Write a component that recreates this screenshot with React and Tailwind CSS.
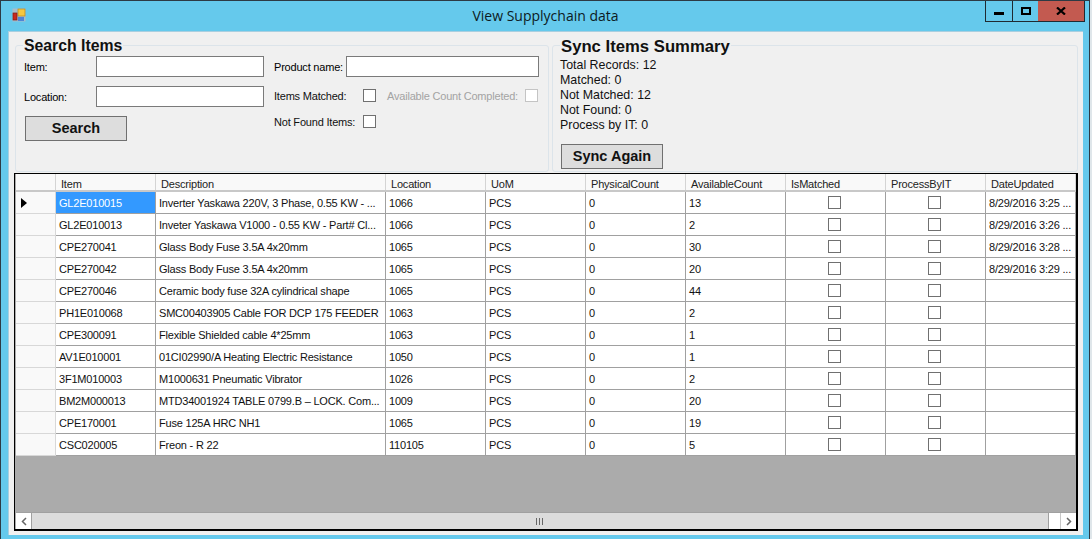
import React from 'react';

const small = "text-[11px] tracking-[-0.2px] whitespace-nowrap";

const columns = ['Item', 'Description', 'Location', 'UoM', 'PhysicalCount', 'AvailableCount', 'IsMatched', 'ProcessByIT', 'DateUpdated'];

const rows = [
    ['GL2E010015', 'Inverter Yaskawa 220V, 3 Phase, 0.55 KW - ...', '1066', '13', '8/29/2016 3:25 ...'],
    ['GL2E010013', 'Inveter Yaskawa V1000 - 0.55 KW - Part# Cl...', '1066', '2', '8/29/2016 3:26 ...'],
    ['CPE270041', 'Glass Body Fuse 3.5A 4x20mm', '1065', '30', '8/29/2016 3:28 ...'],
    ['CPE270042', 'Glass Body Fuse 3.5A 4x20mm', '1065', '20', '8/29/2016 3:29 ...'],
    ['CPE270046', 'Ceramic body fuse 32A cylindrical shape', '1065', '44', ''],
    ['PH1E010068', 'SMC00403905 Cable FOR DCP 175 FEEDER', '1063', '2', ''],
    ['CPE300091', 'Flexible Shielded cable 4*25mm', '1063', '1', ''],
    ['AV1E010001', '01CI02990/A Heating Electric Resistance', '1050', '1', ''],
    ['3F1M010003', 'M1000631 Pneumatic Vibrator', '1026', '2', ''],
    ['BM2M000013', 'MTD34001924 TABLE 0799.B – LOCK. Com...', '1009', '20', ''],
    ['CPE170001', 'Fuse 125A HRC NH1', '1065', '19', ''],
    ['CSC020005', 'Freon - R 22', '110105', '5', ''],
];

const gridCols = 'grid grid-cols-[40px_100px_230px_100px_100px_100px_100px_100px_100px_90px]';

const Check = ({ disabled }) => (
    <span className={`block shrink-0 w-[13px] h-[13px] border bg-white ${disabled ? 'border-[#c4c4c4]' : 'border-[#707070]'}`} />
);

const Field = ({ label, width, labelWidth }) => (
    <div className="flex items-center h-[21px]">
        <span style={{ width: labelWidth }} className={`${small} text-black leading-none shrink-0 mt-[2px]`}>{label}</span>
        <div style={{ width }} className="h-[21px] bg-white border border-[#7a7a7a]" />
    </div>
);

const Cell = ({ children, className = '' }) => (
    <div className={`h-[22px] border-r border-b border-[#a0a0a0] bg-white flex items-center pl-[3px] pt-[2px] ${small} text-[#111] overflow-hidden ${className}`}>
        {children}
    </div>
);

const CheckCell = () => (
    <div className="h-[22px] border-r border-b border-[#a0a0a0] bg-white flex items-center justify-center pr-[2px]"><Check /></div>
);

export default function App() {
    return (
        <div className="w-[1092px] h-[539px] overflow-hidden bg-[#dfe6ea] font-['Liberation_Sans',Arial,sans-serif]">
            <div className="w-[1090px] h-[539px] bg-[#65c9ec] border-t border-l border-r border-[#2d3a44] flex flex-col">
                {/* Title bar */}
                <div className="h-[30px] shrink-0 flex items-start">
                    <svg width="14" height="14" viewBox="0 0 14 14" className="ml-[11px] mt-[7px] shrink-0">
                        <rect x="0.5" y="0.5" width="13" height="13" fill="#a9bcc9" />
                        <rect x="6" y="1" width="7" height="7" fill="#f6c73f" stroke="#b98a1c" strokeWidth="0.7" />
                        <rect x="1" y="5" width="4" height="7" fill="#c8281e" stroke="#7e1a14" strokeWidth="0.7" />
                        <rect x="6" y="9" width="6" height="4" fill="#4f83d6" />
                    </svg>
                    <div className="flex-1 text-center font-['Open_Sans',sans-serif] text-[14px] leading-[30px] text-[#0c1a22] pl-[80px]">View Supplychain data</div>
                    <div className="flex h-[21px] border-b border-r border-l border-[#1f2a32] shrink-0">
                        <div className="w-[27px] border-r border-[#1f2a32] flex items-center justify-center">
                            <span className="block w-[10px] h-[3px] mt-[5px] bg-black" />
                        </div>
                        <div className="w-[25px] flex items-center justify-center">
                            <span className="block w-[10px] h-[8px] border-2 border-black" />
                        </div>
                        <div className="w-[46px] bg-[#c35a50] flex items-center justify-center">
                            <svg width="10" height="8" viewBox="0 0 10 8"><path d="M1 0.5 L9 7.5 M9 0.5 L1 7.5" stroke="#000" strokeWidth="2.2" /></svg>
                        </div>
                    </div>
                    <div className="w-[4px]" />
                </div>

                {/* Client area */}
                <div className="ml-[7px] mr-[6px] h-[504px] bg-[#f0f0f0] border-t border-l border-[#a9cfe0] flex flex-col pl-[5px] pr-[5px] pt-[13px]">
                    <div className="flex gap-[3px] pl-[1px] h-[127px] shrink-0">
                        {/* Search group */}
                        <div className="relative w-[534px] h-[127px] border border-[#dce4ea] rounded-[3px] pl-[8px] pt-[10px] flex gap-[10px]">
                            <span className="absolute left-[7px] top-[-8px] px-[1px] bg-[#f0f0f0] text-[15.8px] font-bold leading-[16px] text-[#111]">Search Items</span>
                            <div className="flex flex-col w-[240px] shrink-0">
                                <Field label="Item:" labelWidth={72} width={168} />
                                <div className="h-[9px]" />
                                <Field label="Location:" labelWidth={72} width={168} />
                                <button className="mt-[9px] ml-[1px] w-[102px] h-[25px] bg-[#dddddd] border border-[#707070] text-[14.5px] font-bold text-[#111]">Search</button>
                            </div>
                            <div className="flex flex-col">
                                <Field label="Product name:" labelWidth={72} width={193} />
                                <div className="h-[11px] shrink-0" />
                                <div className={`flex items-center h-[15px] ${small}`}>
                                    <span className="w-[89px] text-[#111] mt-[2px]">Items Matched:</span>
                                    <Check />
                                    <span className="ml-[11px] w-[138px] text-[#a3a3a3] mt-[2px]">Available Count Completed:</span>
                                    <Check disabled />
                                </div>
                                <div className="h-[11px] shrink-0" />
                                <div className={`flex items-center h-[15px] ${small}`}>
                                    <span className="w-[89px] text-[#111] mt-[2px]">Not Found Items:</span>
                                    <Check />
                                </div>
                            </div>
                        </div>
                        {/* Summary group */}
                        <div className="relative w-[526px] h-[127px] border border-[#dce4ea] rounded-[3px] pl-[7px] pt-[12px] flex flex-col">
                            <span className="absolute left-[7px] top-[-8px] px-[1px] bg-[#f0f0f0] text-[16.7px] font-bold leading-[17px] text-[#111]">Sync Items Summary</span>
                            <div className="text-[12.4px] leading-[15px] text-[#111]">
                                <div>Total Records: 12</div>
                                <div>Matched: 0</div>
                                <div>Not Matched: 12</div>
                                <div>Not Found: 0</div>
                                <div>Process by IT: 0</div>
                            </div>
                            <button className="mt-[11px] ml-[1px] w-[102px] h-[25px] bg-[#dddddd] border border-[#707070] text-[14.5px] font-bold text-[#111]">Sync Again</button>
                        </div>
                    </div>

                    {/* Data grid */}
                    <div className="mt-[1px] w-[1064px] h-[358px] bg-[#ababab] border border-black border-r-2 border-b-2 flex flex-col overflow-hidden pl-[1px]">
                        <div className={`${gridCols} h-[18px] bg-[#f9f9f9] border-b-2 border-[#c8c8c8] shrink-0`}>
                            <div className="border-r border-[#d4d4d4]" />
                            {columns.map((c) => (
                                <div key={c} className={`border-r border-[#d4d4d4] pl-[5px] ${small} leading-[20px] text-[#222] overflow-hidden`}>{c}</div>
                            ))}
                        </div>
                        {rows.map((r, i) => (
                            <div key={r[0]} className={gridCols}>
                                <div className="h-[22px] bg-[#f9f9f9] border-r border-b border-[#d8d8d8] flex items-center pl-[5px]">
                                    {i === 0 && (
                                        <svg width="6" height="10" viewBox="0 0 6 10"><path d="M0 0 L6 5 L0 10 Z" fill="#000" /></svg>
                                    )}
                                </div>
                                <Cell className={i === 0 ? '!bg-[#3399ff] !text-white pl-[2px]' : 'pl-[2px]'}>{r[0]}</Cell>
                                <Cell>{r[1]}</Cell>
                                <Cell>{r[2]}</Cell>
                                <Cell>PCS</Cell>
                                <Cell>0</Cell>
                                <Cell>{r[3]}</Cell>
                                <CheckCell />
                                <CheckCell />
                                <Cell>{r[4]}</Cell>
                            </div>
                        ))}
                        <div className="flex-1" />
                        {/* Horizontal scrollbar */}
                        <div className="h-[17px] bg-[#dcdcdc] border-t border-[#a0a0a0] flex items-stretch shrink-0">
                            <div className="w-[16px] bg-white border-r border-[#a0a0a0] flex items-center justify-center">
                                <svg width="6" height="9" viewBox="0 0 6 9"><path d="M5 1 L1.5 4.5 L5 8" fill="none" stroke="#666" strokeWidth="1.5" /></svg>
                            </div>
                            <div className="flex-1 flex items-center justify-center">
                                <svg width="8" height="7" viewBox="0 0 8 7"><path d="M0.5 0V7M3.5 0V7M6.5 0V7" stroke="#666" /></svg>
                            </div>
                            <div className="w-[12px] bg-white border-l border-[#a0a0a0]" />
                            <div className="w-[16px] bg-white border-l border-[#c8c8c8] flex items-center justify-center">
                                <svg width="6" height="9" viewBox="0 0 6 9"><path d="M1 1 L4.5 4.5 L1 8" fill="none" stroke="#666" strokeWidth="1.5" /></svg>
                            </div>
                        </div>
                    </div>
                </div>
            </div>
        </div>
    );
}
